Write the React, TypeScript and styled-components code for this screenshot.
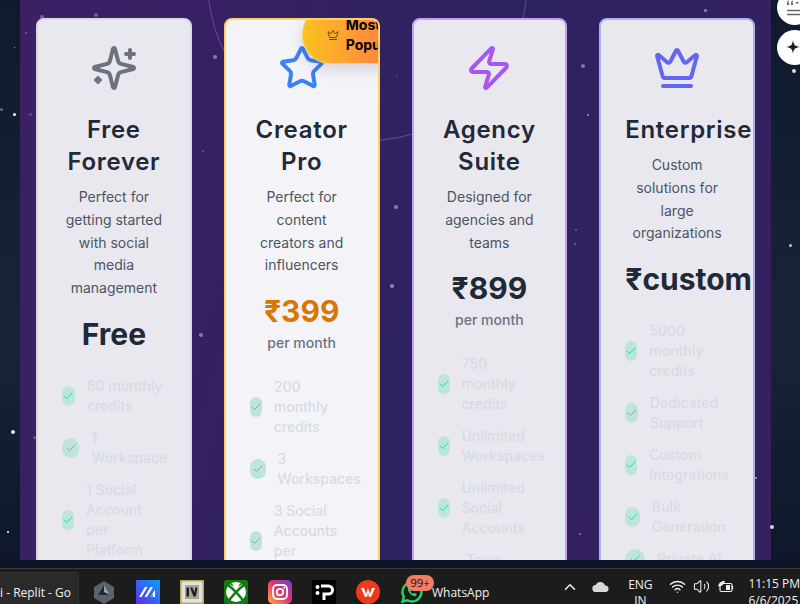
import React from "react";
import styled, { createGlobalStyle } from "styled-components";
import { Check, Crown, Star, Zap, ChevronUp, Wifi, Volume2 } from "lucide-react";

type Accent = "free" | "creator" | "agency" | "enterprise";

const plans: {
  accent: Accent;
  title: string;
  desc: string;
  price: string;
  perMonth: boolean;
  features: string[];
}[] = [
  {
    accent: "free",
    title: "Free Forever",
    desc: "Perfect for getting started with social media management",
    price: "Free",
    perMonth: false,
    features: ["60 monthly credits", "1 Workspace", "1 Social Account per Platform", "Basic Support"],
  },
  {
    accent: "creator",
    title: "Creator Pro",
    desc: "Perfect for content creators and influencers",
    price: "₹399",
    perMonth: true,
    features: ["200 monthly credits", "3 Workspaces", "3 Social Accounts per Platform"],
  },
  {
    accent: "agency",
    title: "Agency Suite",
    desc: "Designed for agencies and teams",
    price: "₹899",
    perMonth: true,
    features: ["750 monthly credits", "Unlimited Workspaces", "Unlimited Social Accounts", "Team Access"],
  },
  {
    accent: "enterprise",
    title: "Enterprise",
    desc: "Custom solutions for large organizations",
    price: "₹custom",
    perMonth: false,
    features: ["5000 monthly credits", "Dedicated Support", "Custom Integrations", "Bulk Generation", "Private AI"],
  },
];

const dots = [
  [14, 47, 1, 0.7], [14, 114, 3, 0.95], [1, 109, 3, 0.35], [13, 432, 4, 0.9], [8, 532, 1.5, 0.9],
  [42, 17, 4, 0.3], [96, 15, 4, 0.3], [26, 33, 2.5, 0.3], [30, 114, 3, 0.2], [215, 57, 3.5, 0.4],
  [203, 151, 2.5, 0.25], [396, 207, 3.5, 0.4], [392, 286, 3.5, 0.45], [397, 76, 2, 0.15], [705, 10, 3, 0.45],
  [583, 66, 4, 0.4], [588, 115, 2.5, 0.5], [576, 230, 2, 0.3], [575, 244, 2, 0.3], [794, 71, 4, 0.85],
  [790, 245, 3, 0.75], [201, 335, 3.5, 0.4], [34, 437, 3, 0.25], [756, 478, 2.5, 0.6], [772, 527, 4, 0.8],
  [580, 534, 2.5, 0.4],
];

const GlobalStyle = createGlobalStyle`
  html, body {
    margin: 0;
    padding: 0;
    background: #1c1c1c;
  }
  * {
    box-sizing: border-box;
  }
`;

const Screen = styled.div`
  width: 800px;
  height: 604px;
  display: flex;
  flex-direction: column;
  overflow: hidden;
  font-family: Inter, "Liberation Sans", sans-serif;
`;

const Viewport = styled.div`
  position: relative;
  height: 560px;
  flex: none;
  padding-left: 20px;
  overflow: hidden;
  background: linear-gradient(180deg, #101a2c 0%, #18233a 60%, #0f1729 100%);
`;

const Panel = styled.main`
  width: 751px;
  height: 560px;
  padding: 18px 16px 0;
  display: grid;
  grid-template-columns: repeat(4, minmax(0, 1fr));
  column-gap: 32px;
  align-items: start;
  overflow: hidden;
  background: linear-gradient(105deg, #3c2065 0%, #2e2260 55%, #36205f 100%);
`;

const Dot = styled.span<{ $x: number; $y: number; $s: number; $o: number }>`
  position: absolute;
  left: ${(p) => p.$x - p.$s / 2}px;
  top: ${(p) => p.$y - p.$s / 2}px;
  width: ${(p) => p.$s}px;
  height: ${(p) => p.$s}px;
  border-radius: 50%;
  background: #ffffff;
  opacity: ${(p) => p.$o};
`;

const Ring = styled.div`
  position: absolute;
  left: 207px;
  top: -180px;
  width: 321px;
  height: 321px;
  border-radius: 50%;
  border: 1px solid rgba(176, 140, 235, 0.4);
`;

const borders: Record<Accent, string> = {
  free: "#d9d9e3",
  creator: "#fcd267",
  agency: "#c79ff0",
  enterprise: "#aab3f2",
};

const iconColors: Record<Accent, string> = {
  free: "#6b7280",
  creator: "#3b82f6",
  agency: "#a855f7",
  enterprise: "#6366f1",
};

const Card = styled.article<{ $accent: Accent }>`
  position: relative;
  z-index: 1;
  padding: 24px;
  border: 2px solid ${(p) => borders[p.$accent]};
  border-radius: 8px;
  overflow: hidden;
  background: ${(p) => (p.$accent === "creator" ? "#f4f4f8" : "#eae8ef")};
  text-align: center;
`;

const IconSlot = styled.div<{ $accent: Accent }>`
  height: 48px;
  margin-bottom: 22px;
  display: flex;
  justify-content: center;
  color: ${(p) => iconColors[p.$accent]};
`;

const Title = styled.h3`
  margin: 0 0 8px;
  font-size: 24px;
  line-height: 32px;
  font-weight: 600;
  letter-spacing: 0.7px;
  color: #1f2937;
`;

const Desc = styled.p`
  margin: 0 0 16px;
  font-size: 14px;
  line-height: 22.75px;
  color: #4b5563;
`;

const Price = styled.div<{ $accent: Accent }>`
  font-size: 30px;
  line-height: 36px;
  font-weight: 700;
  color: ${(p) => (p.$accent === "creator" ? "#d97706" : "#1f2937")};
`;

const Period = styled.div`
  margin-top: 4px;
  font-size: 14px;
  line-height: 20px;
  font-weight: 500;
  color: #6b7280;
`;

const FeatureList = styled.ul`
  margin: 24px 0 0;
  padding: 0;
  list-style: none;
  display: flex;
  flex-direction: column;
  gap: 12px;
`;

const Feature = styled.li`
  display: flex;
  align-items: center;
  gap: 12px;
  text-align: left;
  font-size: 14px;
  line-height: 20px;
  font-weight: 500;
  color: #d4dce8;
`;

const FeatureText = styled.span`
  min-width: 0;
`;

const CheckBadge = styled.span`
  width: 20px;
  height: 20px;
  display: flex;
  align-items: center;
  justify-content: center;
  border-radius: 10px;
  background: #bfe4dc;
  color: #34d399;
`;

const PopularBadge = styled.div`
  position: absolute;
  left: 76px;
  top: -14px;
  width: 120px;
  padding: 8px 0 8px 24px;
  display: flex;
  align-items: center;
  gap: 7px;
  text-align: left;
  border: 1px solid #fcd267;
  border-radius: 28px;
  background: linear-gradient(90deg, #fcc11f 0%, #fe8a3e 62%);
  box-shadow: 0 6px 14px rgba(60, 40, 90, 0.16);
  color: #000000;
  font-size: 14px;
  line-height: 20px;
  font-weight: 700;
  svg {
    flex: none;
    color: #6b4a10;
  }
`;

const PopularText = styled.span`
  width: 60px;
`;

const SideButton = styled.button<{ $top: number }>`
  position: absolute;
  z-index: 2;
  left: 777px;
  top: ${(p) => p.$top}px;
  width: 36px;
  height: 35px;
  padding: 0 0 0 9px;
  border: none;
  border-radius: 50%;
  background: #ffffff;
  display: flex;
  align-items: center;
`;

const Strip = styled.div`
  height: 8px;
  flex: none;
  background: #0e1527;
`;

const Taskbar = styled.footer`
  position: relative;
  flex: 1;
  display: flex;
  align-items: flex-end;
  background: #1c1c1c;
  border-top: 1px solid #3a3a3a;
  color: #f1f1f1;
  font-family: "Open Sans", "Noto Sans", sans-serif;
  font-size: 12px;
  overflow: hidden;
`;

const TaskButton = styled.div`
  width: 79px;
  height: 32px;
  flex: none;
  padding-top: 10px;
  margin-right: 13px;
  background: #2a2a2a;
  border: 1px solid #333333;
  border-left: none;
  border-bottom: none;
  border-radius: 0 4px 0 0;
  white-space: nowrap;
  overflow: hidden;
  line-height: 20px;
`;

const AppIcons = styled.div`
  display: flex;
  align-items: flex-end;
  gap: 20px;
  height: 24px;
`;

const AppIcon = styled.svg`
  width: 24px;
  height: 24px;
  flex: none;
  display: block;
`;

const WhatsAppItem = styled.div`
  position: relative;
  display: flex;
  align-items: center;
  gap: 8px;
  white-space: nowrap;
`;

const CountBadge = styled.span`
  position: absolute;
  left: 6px;
  top: -5px;
  width: 28px;
  height: 16px;
  border-radius: 8px;
  background: #f47c64;
  color: #1a0a08;
  font-size: 11.5px;
  line-height: 16px;
  text-align: center;
`;

const Tray = styled.div`
  margin-left: 72px;
  height: 35px;
  flex: none;
  display: flex;
  align-items: center;
  color: #f1f1f1;
`;

const CloudIcon = styled.svg`
  margin-left: 13px;
  flex: none;
`;

const Lang = styled.div`
  width: 36px;
  margin: 0 11px 0 12px;
  align-self: flex-start;
  padding-top: 8px;
  text-align: center;
  font-size: 12px;
  line-height: 16px;
  white-space: nowrap;
`;

const TrayIcons = styled.div`
  display: flex;
  align-items: center;
  gap: 7px;
`;

const Clock = styled.div`
  margin-left: 14px;
  align-self: flex-start;
  padding-top: 6px;
  font-size: 12px;
  line-height: 17px;
  white-space: nowrap;
`;

const planIcons: Record<Accent, React.ReactNode> = {
  free: (
    <svg width="48" height="48" viewBox="0 0 24 24" fill="none" stroke="currentColor" strokeWidth="2" strokeLinecap="round" strokeLinejoin="round">
      <path d="M9.937 15.5A2 2 0 0 0 8.5 14.063l-6.135-1.582a.5.5 0 0 1 0-.962L8.5 9.936A2 2 0 0 0 9.937 8.5l1.582-6.135a.5.5 0 0 1 .963 0L14.063 8.5A2 2 0 0 0 15.5 9.937l6.135 1.581a.5.5 0 0 1 0 .964L15.5 14.063a2 2 0 0 0-1.437 1.437l-1.582 6.135a.5.5 0 0 1-.963 0z" />
      <path d="M20 3v4" />
      <path d="M22 5h-4" />
      <path d="M4 17v2" />
      <path d="M5 18H3" />
    </svg>
  ),
  creator: <Star size={48} />,
  agency: <Zap size={48} />,
  enterprise: <Crown size={48} />,
};

const App = () => (
  <>
    <GlobalStyle />
    <Screen>
      <Viewport>
        <Panel>
          {plans.map((plan) => (
            <Card key={plan.title} $accent={plan.accent}>
              <IconSlot $accent={plan.accent}>{planIcons[plan.accent]}</IconSlot>
              {plan.accent === "creator" && (
                <PopularBadge>
                  <Crown size={12} />
                  <PopularText>Most Popular</PopularText>
                </PopularBadge>
              )}
              <Title>{plan.title}</Title>
              <Desc>{plan.desc}</Desc>
              <Price $accent={plan.accent}>{plan.price}</Price>
              {plan.perMonth && <Period>per month</Period>}
              <FeatureList>
                {plan.features.map((feature) => (
                  <Feature key={feature}>
                    <CheckBadge>
                      <Check size={12} />
                    </CheckBadge>
                    <FeatureText>{feature}</FeatureText>
                  </Feature>
                ))}
              </FeatureList>
            </Card>
          ))}
        </Panel>
        <Ring />
        {dots.map(([x, y, s, o]) => (
          <Dot key={`${x}-${y}`} $x={x} $y={y} $s={s} $o={o} />
        ))}
        <SideButton $top={-10}>
          <svg width="24" height="24" viewBox="0 0 24 24" fill="none" stroke="#666" strokeWidth="1.3">
            <path d="M1 7.5c0-2 1-3 2-3v1.4c-.5 0-.8.5-.8 1h.9v2.1H1zM5 7.5c0-2 1-3 2-3v1.4c-.5 0-.8.5-.8 1h.9v2.1H5z" fill="#666" stroke="none" />
            <path d="M10 6h2.5v1.6H10zM14 6h2.5v1.6H14z" fill="#666" stroke="none" />
            <path d="M1 14.5h20M1 18.5h20" />
          </svg>
        </SideButton>
        <SideButton $top={30}>
          <svg width="22" height="22" viewBox="0 0 22 22" fill="#1d1d1f">
            <path d="M7 3 C7.6 8 9 9.4 14 10 C9 10.6 7.6 12 7 17 C6.4 12 5 10.6 0 10 C5 9.4 6.4 8 7 3Z" />
            <path d="M17 6v8M14 10h8" stroke="#1d1d1f" strokeWidth="2" />
          </svg>
        </SideButton>
      </Viewport>
      <Strip />
      <Taskbar>
        <TaskButton>i - Replit - Go</TaskButton>
        <AppIcons>
          <AppIcon viewBox="0 0 24 24">
            <path d="M12 1 22 7v11l-10 6L2 18V7z" fill="#5b626b" />
            <path d="M12 5 18 15H6z" fill="#262a30" />
            <path d="M12 5 18 15l-6-3z" fill="#9aa1aa" />
          </AppIcon>
          <AppIcon viewBox="0 0 24 24">
            <defs>
              <linearGradient id="mg" x1="0" y1="1" x2="1" y2="0">
                <stop offset="0" stopColor="#5b2df5" />
                <stop offset="1" stopColor="#0aa0f5" />
              </linearGradient>
            </defs>
            <rect width="24" height="24" fill="url(#mg)" />
            <path d="M3 17 9 7h2.5l-6 10zM8.500 17 14.500 7h2.500l-6 10zM14.500 17 19 9.500V17h-2.200v-3l-1.800 3z" fill="#ffffff" />
          </AppIcon>
          <AppIcon viewBox="0 0 24 24">
            <rect width="24" height="24" fill="#b9a35a" />
            <rect x="1.500" y="1.500" width="21" height="21" fill="#e4e2da" />
            <rect x="5" y="5" width="14" height="14" fill="#a9a69c" />
            <path d="M6.500 7.500h2.500v9H6.500zM10 7.500h2.500l2 5 .8-5h2.200l-1.700 9h-2.300z" fill="#1e1e1e" />
          </AppIcon>
          <AppIcon viewBox="0 0 24 24">
            <rect width="24" height="24" rx="2" fill="#107c10" />
            <circle cx="12" cy="12" r="10" fill="#ffffff" />
            <path d="M12 8.500C9.500 6 7 3.500 5.500 3.500M12 8.500C14.500 6 17 3.500 18.500 3.500" stroke="#107c10" strokeWidth="1.400" fill="none" />
            <path d="M4 5c4 3 11 10 15.500 16M20 5C16 8 9 15 4.500 21" stroke="#107c10" strokeWidth="2.400" fill="none" />
            <path d="M12 9.500 8 5.500h8z" fill="#ffffff" />
          </AppIcon>
          <AppIcon viewBox="0 0 24 24">
            <defs>
              <linearGradient id="ig" x1="0" y1="1" x2="1" y2="0">
                <stop offset="0" stopColor="#fdb33c" />
                <stop offset="0.5" stopColor="#e6356f" />
                <stop offset="1" stopColor="#6a3fd0" />
              </linearGradient>
            </defs>
            <rect width="24" height="24" rx="5" fill="url(#ig)" />
            <rect x="5" y="5" width="14" height="14" rx="4" fill="none" stroke="#fff" strokeWidth="1.8" />
            <circle cx="12" cy="12" r="3.2" fill="none" stroke="#fff" strokeWidth="1.8" />
            <circle cx="16.2" cy="7.8" r="1" fill="#fff" />
          </AppIcon>
          <AppIcon viewBox="0 0 24 24">
            <rect width="24" height="24" rx="2" fill="#000000" />
            <path d="M9 6h7.500a4 4 0 0 1 0 8H12v6" fill="none" stroke="#fff" strokeWidth="3" />
            <circle cx="5.500" cy="7" r="2" fill="#fff" />
            <circle cx="5.500" cy="13" r="2" fill="#fff" />
          </AppIcon>
          <AppIcon viewBox="0 0 24 24">
            <circle cx="12" cy="12" r="12" fill="#f0391b" />
            <path d="M5 8h3l2 6 2-6 2 6 2-6h3l-4 9h-2l-1-4-1 4H9z" fill="#ffffff" />
          </AppIcon>
          <WhatsAppItem>
            <AppIcon viewBox="0 0 24 24">
              <path d="M12 2.500a9.500 9.500 0 0 0-8.200 14.300L2.500 21.500l4.800-1.200A9.500 9.500 0 1 0 12 2.500z" fill="none" stroke="#25d366" strokeWidth="2.400" />
              <path d="M8.500 7.500c-1 1 -1 3 1 5.500s4.500 3.800 6 3c1-.6 1.200-1.600 1-2l-2.400-1.200-1 1.100c-1-.4-2.300-1.700-2.800-2.900l1-1L10 7.500z" fill="#25d366" />
            </AppIcon>
            <CountBadge>99+</CountBadge>
            WhatsApp
          </WhatsAppItem>
        </AppIcons>
        <Tray>
          <ChevronUp size={18} strokeWidth={2} />
          <CloudIcon width="18" height="12" viewBox="0 0 18 12">
            <path d="M4 11a3.500 3.500 0 0 1-.3-7A5 5 0 0 1 13 4.500 3.300 3.300 0 0 1 14 11z" fill="#d8d8d8" />
          </CloudIcon>
          <Lang>
            ENG
            <br />
            IN
          </Lang>
          <TrayIcons>
            <Wifi size={17} />
            <Volume2 size={17} strokeWidth={1.5} />
            <svg width="17" height="14" viewBox="0 0 17 14" fill="none" stroke="#f1f1f1" strokeWidth="1.2">
              <rect x="3" y="3.500" width="12" height="8" rx="1.500" />
              <path d="M15.500 6v3" />
              <path d="M1 6c2-5 5-5 7-5-1 3-3 6-7 5z" fill="#f1f1f1" stroke="none" />
              <rect x="9" y="5" width="4" height="5" fill="#f1f1f1" stroke="none" />
            </svg>
          </TrayIcons>
          <Clock>
            11:15 PM
            <br />
            6/6/2025
          </Clock>
        </Tray>
      </Taskbar>
    </Screen>
  </>
);

export default App;
